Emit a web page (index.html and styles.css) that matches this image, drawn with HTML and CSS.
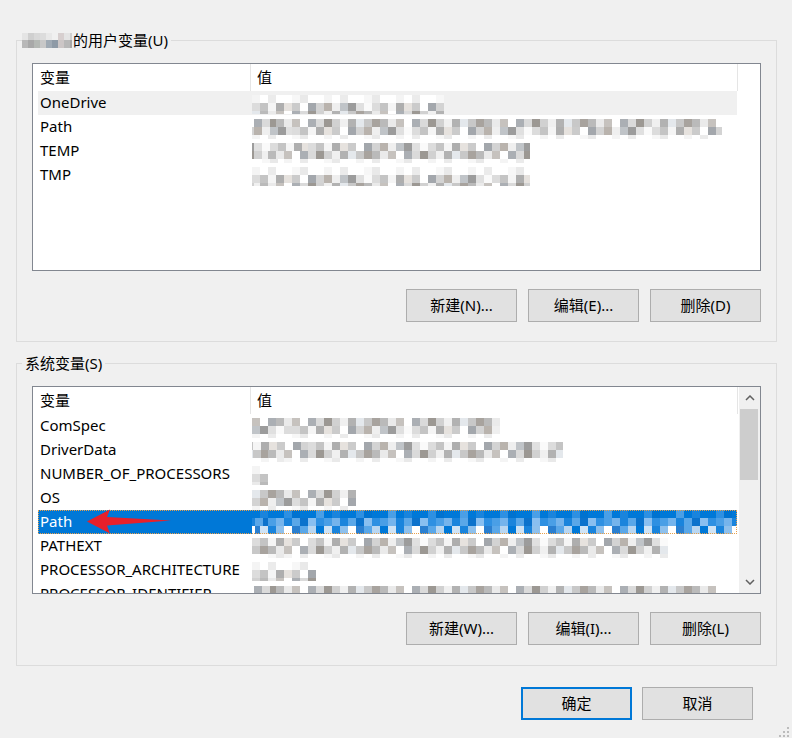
FILE: index.html
```html
<!DOCTYPE html>
<html lang="zh-CN">
<head>
<meta charset="utf-8">
<title>环境变量</title>
<link rel="stylesheet" href="styles.css">
</head>
<body>
<div class="dialog">
  <fieldset class="group g1">
    <legend><span class="user-mosaic"></span>的用户变量(U)</legend>
    <div class="listbox">
      <div class="list-main">
        <div class="lv-header"><div class="hc c1">变量</div><div class="hc c2">值</div></div>
        <div class="rows">
          <div class="row hover"><span class="name">OneDrive</span><span class="val m1 w192"></span></div>
          <div class="row"><span class="name">Path</span><span class="val m2 w470"></span></div>
          <div class="row"><span class="name">TEMP</span><span class="val m3 w278"></span></div>
          <div class="row"><span class="name">TMP</span><span class="val m1 w278"></span></div>
        </div>
      </div>
      <div class="noscroll"></div>
    </div>
    <div class="btns">
      <button class="btn">新建(N)...</button>
      <button class="btn">编辑(E)...</button>
      <button class="btn">删除(D)</button>
    </div>
  </fieldset>

  <fieldset class="group g2">
    <legend>系统变量(S)</legend>
    <div class="listbox">
      <div class="list-main">
        <div class="lv-header"><div class="hc c1">变量</div><div class="hc c2">值</div></div>
        <div class="rows">
          <div class="row"><span class="name">ComSpec</span><span class="val m2 w248"></span></div>
          <div class="row"><span class="name">DriverData</span><span class="val m3 w311"></span></div>
          <div class="row"><span class="name">NUMBER_OF_PROCESSORS</span><span class="val m1 w16"></span></div>
          <div class="row"><span class="name">OS</span><span class="val m2 w104"></span></div>
          <div class="row selected">
            <span class="name">Path</span><span class="val mb w485"></span>
            <svg class="red-arrow" width="88" height="27" viewBox="0 0 88 27" aria-hidden="true">
              <polygon points="2,13.5 25,1.5 22,9 86,12.5 22,17.5 25,25.5" fill="#e8202a"/>
            </svg>
          </div>
          <div class="row"><span class="name">PATHEXT</span><span class="val m3 w416"></span></div>
          <div class="row"><span class="name">PROCESSOR_ARCHITECTURE</span><span class="val m1 w64"></span></div>
          <div class="row"><span class="name">PROCESSOR_IDENTIFIER</span><span class="val m2 w470"></span></div>
        </div>
      </div>
      <div class="vscroll">
        <div class="sarrow">
          <svg width="10" height="6" viewBox="0 0 10 6"><polyline points="1,5 5,1 9,5" fill="none" stroke="#606060" stroke-width="1.5"/></svg>
        </div>
        <div class="thumb"></div>
        <div class="track"></div>
        <div class="sarrow">
          <svg width="10" height="6" viewBox="0 0 10 6"><polyline points="1,1 5,5 9,1" fill="none" stroke="#606060" stroke-width="1.5"/></svg>
        </div>
      </div>
    </div>
    <div class="btns">
      <button class="btn">新建(W)...</button>
      <button class="btn">编辑(I)...</button>
      <button class="btn">删除(L)</button>
    </div>
  </fieldset>

  <div class="footer">
    <button class="btn default">确定</button>
    <button class="btn">取消</button>
  </div>

  <svg class="grip" width="12" height="12" viewBox="0 0 12 12" aria-hidden="true">
    <rect x="9" y="1" width="2" height="2" fill="#bcbcbc"/>
    <rect x="5" y="5" width="2" height="2" fill="#bcbcbc"/>
    <rect x="9" y="5" width="2" height="2" fill="#bcbcbc"/>
    <rect x="1" y="9" width="2" height="2" fill="#bcbcbc"/>
    <rect x="5" y="9" width="2" height="2" fill="#bcbcbc"/>
    <rect x="9" y="9" width="2" height="2" fill="#bcbcbc"/>
  </svg>
</div>
</body>
</html>
```
FILE: styles.css
```css
:root {
  --pa: repeating-linear-gradient(90deg, #dcdcdc 0 8px, #c4c4c4 8px 16px, #f5f5f5 16px 24px, #aeaeae 24px 32px, #e6e2de 32px 40px, #cbcbcb 40px 48px, #ffffff 48px 56px, #a3a7ac 56px 64px, #d3d3d3 64px 72px, #b9b3ad 72px 80px, #efefef 80px 88px, #c0c4c8 88px 96px, #9c9c9c 96px 104px, #e0e0e0 104px 112px, #fafafa 112px 120px);
  --pb: repeating-linear-gradient(90deg, #bababa 0 8px, #eaeaea 8px 16px, #c6c2be 16px 24px, #ffffff 24px 32px, #abafb4 32px 40px, #dadada 40px 48px, #9c9893 48px 56px, #d1d1d1 56px 64px, #f0f0f0 64px 72px, #b2b2b2 72px 80px, #e4e8ec 80px 88px, #c8c8c8 88px 96px, #a8a39e 96px 104px);
  --pc: repeating-linear-gradient(90deg, #f4f4f4 0 8px, #ffffff 8px 16px, #ebebeb 16px 24px, #ffffff 24px 40px, #f7f7f7 40px 48px, #e9e9e9 48px 56px, #ffffff 56px 72px);
  --bb: repeating-linear-gradient(90deg, #0078d7 0 8px, #1a84dc 8px 16px, #0078d7 16px 32px, #2e90e2 32px 40px, #0072cf 40px 48px, #0078d7 48px 64px, #4a9fe6 64px 72px);
  --bc: repeating-linear-gradient(90deg, #4a9fe6 0 8px, #75b4ec 8px 16px, #1a84dc 16px 24px, #5aa7e8 24px 32px, #0b72cc 32px 40px, #89bff0 40px 48px, #2e90e2 48px 56px);
  --bd: repeating-linear-gradient(90deg, #cfe3f5 0 8px, #1a84dc 8px 16px, #8ec0ec 16px 24px, #ffffff 24px 32px, #2a7fd0 32px 40px, #5aa7e8 40px 48px, #b8d6f1 48px 56px, #0078d7 56px 64px);
}

html, body {
  margin: 0;
  height: 738px;
  overflow: hidden;
  background: #f0f0f0;
}

body {
  font-family: "Noto Sans", "Noto Sans CJK SC", sans-serif;
  font-size: 15px;
  color: #000;
}

.dialog {
  position: relative;
  height: 738px;
  box-sizing: border-box;
  padding: 30px 15px 0 16px;
}

.group {
  margin: 0;
  padding: 13px 15px 19px;
  border: 1px solid #dcdcdc;
  min-width: 0;
}

.g2 {
  margin-top: 11px;
  padding-bottom: 20px;
}

.group legend {
  margin-left: -10px;
  padding: 0 3px;
  line-height: 20px;
  font-size: 15px;
  display: flex;
  align-items: center;
}

.user-mosaic {
  display: inline-block;
  width: 50px;
  height: 15px;
  margin-left: -3px;
  margin-right: 1px;
  background-image:
    repeating-linear-gradient(90deg, #e4e4e4 0 6px, #cfcfcf 6px 12px, #d8d8d8 12px 18px, #dcdcdc 18px 24px, #e8e8e8 24px 30px, #f0f0f0 30px 36px, #d7cfcf 36px 42px),
    repeating-linear-gradient(90deg, #b8b8b8 0 6px, #a8a8a8 6px 12px, #b4b8b4 12px 18px, #c8c8c8 18px 24px, #a0aab4 24px 30px, #8e9aa6 30px 36px, #ccc6c6 36px 42px);
  background-size: 100% 7px, 100% 8px;
  background-position: 0 0, 0 7px;
  background-repeat: no-repeat;
}

.listbox {
  display: flex;
  height: 208px;
  box-sizing: border-box;
  border: 1px solid #828790;
  background: #fff;
}

.list-main {
  width: 706px;
  flex: none;
  overflow: hidden;
}

.noscroll {
  flex: 1;
}

.lv-header {
  display: flex;
  height: 27px;
}

.hc {
  box-sizing: border-box;
  border-right: 1px solid #e5e5e5;
  line-height: 27px;
  white-space: nowrap;
}

.hc.c1 {
  width: 218px;
  padding-left: 7px;
}

.hc.c2 {
  width: 487px;
  padding-left: 6px;
}

.rows {
  margin-left: 5px;
  width: 699px;
}

.row {
  position: relative;
  display: grid;
  grid-template-columns: 212px 1fr;
  height: 24px;
  box-sizing: border-box;
  line-height: 23px;
}

.row.hover {
  background: #f0f0f0;
}

.row.selected {
  background: #0078d7;
  color: #fff;
  outline: 1px dotted #e9a04a;
  outline-offset: -1px;
}

.name {
  padding-left: 2px;
  white-space: nowrap;
}

.val {
  display: block;
  height: 24px;
  margin-left: 2px;
  background-repeat: repeat-x;
  background-size: 100% 8px;
}

.m1 {
  background-image: var(--pc), var(--pa), var(--pb);
  background-position: 0 4px, 0 12px, 8px 20px;
  background-size: 100% 8px, 100% 8px, 100% 3px;
}

.m2 {
  background-image: var(--pb), var(--pa), var(--pc);
  background-position: 24px 4px, 40px 12px, 0 20px;
}

.m3 {
  background-image: var(--pa), var(--pb), var(--pc);
  background-position: 56px 4px, 16px 12px, 32px 20px;
  background-size: 100% 8px, 100% 8px, 100% 4px;
}

.mb {
  background-image: var(--bb), var(--bc), var(--bd);
  background-position: 0 0, 16px 8px, 8px 16px;
}

.w16 { width: 16px; }
.w64 { width: 64px; }
.w104 { width: 104px; }
.w192 { width: 192px; }
.w248 { width: 248px; }
.w278 { width: 278px; }
.w311 { width: 311px; }
.w416 { width: 416px; }
.w470 { width: 470px; }
.w485 { width: 485px; }

.red-arrow {
  position: absolute;
  left: 47px;
  top: -2px;
}

.vscroll {
  width: 21px;
  flex: none;
  display: flex;
  flex-direction: column;
  background: #f0f0f0;
}

.sarrow {
  height: 22px;
  display: flex;
  align-items: center;
  justify-content: center;
}

.thumb {
  height: 71px;
  margin: 0 2px 0 1px;
  background: #cdcdcd;
}

.track {
  flex: 1;
}

.btns {
  display: flex;
  justify-content: flex-end;
  gap: 11px;
  margin-top: 18px;
}

.btn {
  width: 111px;
  height: 33px;
  box-sizing: border-box;
  border: 1px solid #adadad;
  background: #e1e1e1;
  font-family: "Noto Sans", "Noto Sans CJK SC", sans-serif;
  font-size: 15px;
  color: #000;
  padding: 0;
  line-height: 31px;
}

.btn.default {
  border: 2px solid #0078d7;
  line-height: 29px;
}

.footer {
  display: flex;
  justify-content: flex-end;
  gap: 10px;
  margin-top: 21px;
  padding-right: 24px;
}

.grip {
  position: absolute;
  right: 2px;
  bottom: 0;
}
```
